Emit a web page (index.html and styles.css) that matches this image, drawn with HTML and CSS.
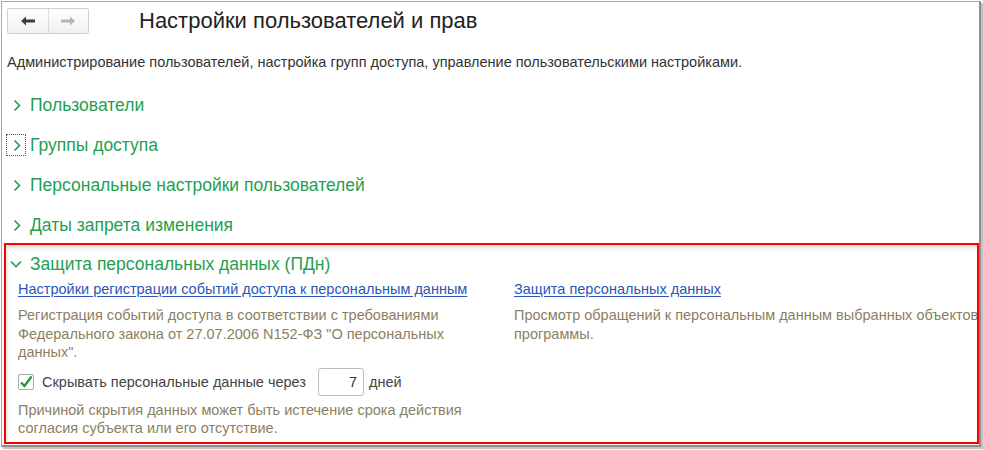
FILE: index.html
```html
<!DOCTYPE html>
<html lang="ru">
<head>
<meta charset="utf-8">
<link rel="stylesheet" href="styles.css">
</head>
<body>
<div class="window">
  <div class="toolbar">
    <div class="nav">
      <div class="nav-btn">
        <svg width="16" height="12" viewBox="0 0 16 12"><path d="M1 6 L6 1.5 L6 4.5 L15 4.5 L15 7.5 L6 7.5 L6 10.5 Z" fill="#3d3d3d"/></svg>
      </div>
      <div class="nav-btn">
        <svg width="16" height="12" viewBox="0 0 16 12"><path d="M15 6 L10 1.5 L10 4.5 L1 4.5 L1 7.5 L10 7.5 L10 10.5 Z" fill="#b5b5b5"/></svg>
      </div>
    </div>
    <div class="title">Настройки пользователей и прав</div>
  </div>
  <div class="desc">Администрирование пользователей, настройка групп доступа, управление пользовательскими настройками.</div>
  <div class="groups">
    <div class="group-row">
      <span class="chev"><svg width="8" height="13" viewBox="0 0 8 13"><path d="M1.5 1.5 L6.5 6.5 L1.5 11.5" fill="none" stroke="#1f9f52" stroke-width="1.6"/></svg></span>
      <span class="group-title">Пользователи</span>
    </div>
    <div class="group-row">
      <span class="chev focus"><svg width="8" height="13" viewBox="0 0 8 13"><path d="M1.5 1.5 L6.5 6.5 L1.5 11.5" fill="none" stroke="#1f9f52" stroke-width="1.6"/></svg></span>
      <span class="group-title">Группы доступа</span>
    </div>
    <div class="group-row">
      <span class="chev"><svg width="8" height="13" viewBox="0 0 8 13"><path d="M1.5 1.5 L6.5 6.5 L1.5 11.5" fill="none" stroke="#1f9f52" stroke-width="1.6"/></svg></span>
      <span class="group-title">Персональные настройки пользователей</span>
    </div>
    <div class="group-row">
      <span class="chev"><svg width="8" height="13" viewBox="0 0 8 13"><path d="M1.5 1.5 L6.5 6.5 L1.5 11.5" fill="none" stroke="#1f9f52" stroke-width="1.6"/></svg></span>
      <span class="group-title">Даты запрета изменения</span>
    </div>
  </div>
  <div class="highlight">
    <div class="open-head">
      <span class="chev-down"><svg width="12" height="8" viewBox="0 0 12 8"><path d="M1 1.5 L6 6.5 L11 1.5" fill="none" stroke="#1f9f52" stroke-width="1.6"/></svg></span>
      <span class="group-title">Защита персональных данных (ПДн)</span>
    </div>
    <div class="cols">
      <div class="col-left">
        <a class="link" href="#">Настройки регистрации событий доступа к персональным данным</a>
        <div class="note">Регистрация событий доступа в соответствии с требованиями Федерального закона от 27.07.2006 N152-ФЗ "О персональных данных".</div>
        <div class="check-row">
          <span class="checkbox"><svg width="14" height="14" viewBox="0 0 14 14"><path d="M2 7.5 L5.5 11 L12.5 1.5" fill="none" stroke="#1e9a3c" stroke-width="2.4"/></svg></span>
          <span class="check-label">Скрывать персональные данные через</span>
          <span class="num-input">7</span>
          <span class="check-label">дней</span>
        </div>
        <div class="note hint">Причиной скрытия данных может быть истечение срока действия согласия субъекта или его отсутствие.</div>
      </div>
      <div class="col-right">
        <a class="link" href="#">Защита персональных данных</a>
        <div class="note">Просмотр обращений к персональным данным выбранных объектов программы.</div>
      </div>
    </div>
  </div>
</div>
</body>
</html>
```

FILE: styles.css
```css
html, body {
  margin: 0;
  padding: 0;
  background: #ffffff;
}
body {
  width: 983px;
  height: 450px;
  overflow: hidden;
  font-family: "Liberation Sans", Arial, sans-serif;
}
.window {
  margin: 1px 0 0 1px;
  width: 977px;
  height: 443px;
  border-top: 1px solid #a8a8a8;
  border-left: 1px solid #a8a8a8;
  border-right: 2px solid #8c8c8c;
  border-bottom: 2px solid #8c8c8c;
  box-shadow: 2px 2px 1px #c4c4c4;
  background: #fff;
  overflow: hidden;
}
.toolbar {
  display: flex;
  align-items: center;
  padding: 6px 0 0 5px;
  height: 26px;
}
.nav {
  display: flex;
  width: 82px;
  height: 26px;
  box-sizing: border-box;
  border: 1px solid #d0d0d0;
  border-radius: 2px;
  background: linear-gradient(#ffffff, #f0f0f0);
}
.nav-btn {
  flex: 1;
  display: flex;
  align-items: center;
  justify-content: center;
}
.nav-btn + .nav-btn {
  border-left: 1px solid #dadada;
}
.title {
  margin-left: 50px;
  font-size: 22px;
  color: #222;
}
.desc {
  margin: 20px 0 0 5px;
  font-size: 14.5px;
  line-height: 16px;
  color: #333;
}
.groups {
  margin-top: 15px;
}
.group-row {
  display: flex;
  align-items: center;
  height: 40px;
}
.chev {
  width: 18px;
  height: 20px;
  margin-left: 5px;
  margin-right: 5px;
  box-sizing: border-box;
  display: flex;
  align-items: center;
  justify-content: center;
  padding-left: 2px;
}
.chev.focus {
  outline: 1px dotted #555;
}
.group-title {
  font-size: 17.5px;
  color: #1f9f52;
}
.highlight {
  margin: -2px 0 0 2px;
  width: 975px;
  height: 201px;
  box-sizing: border-box;
  border: 2px solid #ff0000;
  box-shadow: inset 3px 5px 5px -3px rgba(0, 0, 0, 0.18);
}
.open-head {
  display: flex;
  align-items: center;
  height: 20px;
  margin-top: 9px;
  padding-left: 4px;
}
.chev-down {
  display: flex;
  width: 12px;
  margin-right: 8px;
}
.cols {
  display: flex;
  margin-top: 6px;
  padding-left: 12px;
}
.col-left {
  width: 496px;
  flex-shrink: 0;
}
.col-right {
  flex: 1;
  min-width: 0;
}
.link {
  display: inline-block;
  font-size: 14.5px;
  line-height: 16px;
  color: #2a57b5;
  text-decoration: underline;
  text-underline-offset: 2px;
}
.note {
  margin-top: 8px;
  font-size: 14.5px;
  line-height: 18.5px;
  color: #8b7f62;
  width: 455px;
}
.col-right .note {
  width: 472px;
}
.check-row {
  display: flex;
  align-items: center;
  height: 28px;
  margin-top: 6px;
}
.checkbox {
  width: 16px;
  height: 16px;
  box-sizing: border-box;
  border: 1px solid #a9a9a9;
  border-radius: 2px;
  display: flex;
  align-items: center;
  justify-content: center;
  margin-right: 8px;
}
.check-label {
  font-size: 14.5px;
  color: #444;
}
.num-input {
  width: 46px;
  height: 28px;
  box-sizing: border-box;
  border: 1px solid #bdbdbd;
  border-radius: 3px;
  margin: 0 5px 0 12px;
  font-size: 14.5px;
  color: #333;
  text-align: right;
  padding-right: 6px;
  line-height: 26px;
}
.hint {
  margin-top: 5px;
}
```
